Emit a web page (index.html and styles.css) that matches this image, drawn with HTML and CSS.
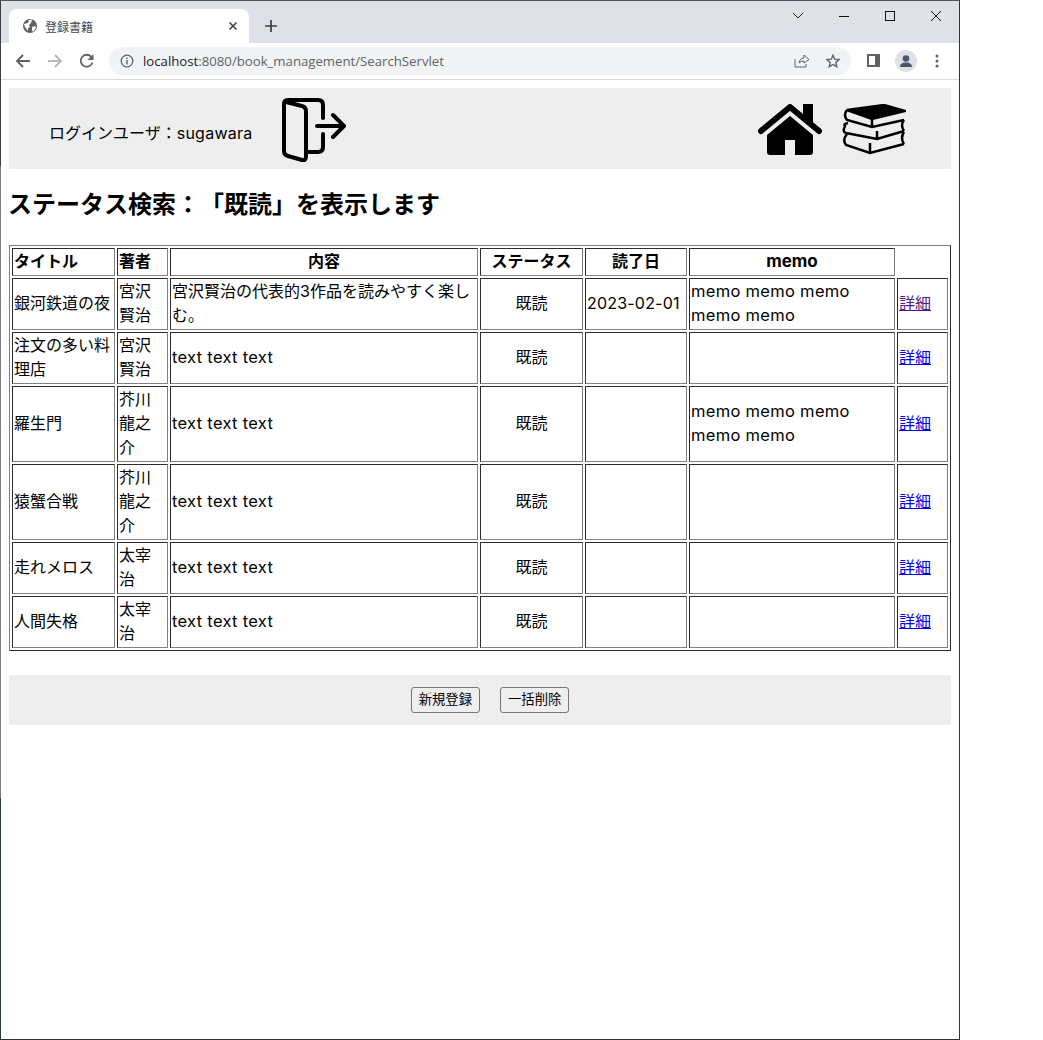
FILE: index.html
```html
<!DOCTYPE html>
<html lang="ja">

<head>
    <meta charset="UTF-8">
    <title>登録書籍</title>
    <link rel="stylesheet" href="styles.css">
</head>

<body>
    <div class="window">
        <div class="tabstrip">
            <div class="tab">
                <svg class="favicon" width="16" height="16" viewBox="0 0 16 16">
                    <circle cx="8" cy="8" r="7" fill="#5f6368"/>
                    <path d="M2 6 L6 5 L7 2 L10 1.500 L9 5 L7 7 L8 9 L6 10 L6 13 L3 9 Z M10 9 L13 8 L14 10 L11 14 L10 12 Z" fill="#fff"/>
                </svg>
                <span class="tab-title">登録書籍</span>
                <svg class="tab-close" width="10" height="10" viewBox="0 0 10 10">
                    <path d="M1.500 1.500 L8.500 8.500 M8.500 1.500 L1.500 8.500" stroke="#3c4043" stroke-width="1.600"/>
                </svg>
            </div>
            <svg class="newtab" width="12" height="12" viewBox="0 0 12 12">
                <path d="M6 0 V12 M0 6 H12" stroke="#3c4043" stroke-width="1.700"/>
            </svg>
            <div class="winctrls">
                <svg class="winbtn" width="46" height="30" viewBox="0 0 46 30"><path d="M18 12 L23 17 L28 12" fill="none" stroke="#222" stroke-width="1"/></svg>
                <svg class="winbtn" width="46" height="30" viewBox="0 0 46 30"><path d="M18 15.500 H28" stroke="#111" stroke-width="1"/></svg>
                <svg class="winbtn" width="46" height="30" viewBox="0 0 46 30"><rect x="18.500" y="10.500" width="9" height="9" fill="none" stroke="#111" stroke-width="1"/></svg>
                <svg class="winbtn" width="46" height="30" viewBox="0 0 46 30"><path d="M18 10 L28 20 M28 10 L18 20" stroke="#111" stroke-width="1"/></svg>
            </div>
        </div>

        <div class="toolbar">
            <svg width="16" height="14" viewBox="0 0 16 14"><path d="M15 7 H2 M8 1 L2 7 L8 13" fill="none" stroke="#5f6368" stroke-width="1.800"/></svg>
            <svg width="16" height="14" viewBox="0 0 16 14"><path d="M1 7 H14 M8 1 L14 7 L8 13" fill="none" stroke="#b4b7bb" stroke-width="1.800"/></svg>
            <svg width="16" height="16" viewBox="0 0 16 16"><path d="M13.500 9.500 A6 6 0 1 1 12.300 3.800" fill="none" stroke="#5f6368" stroke-width="1.800"/><path d="M14.500 1 V7 H8.500 Z" fill="#5f6368"/></svg>
            <div class="omnibox">
                <svg width="14" height="14" viewBox="0 0 14 14"><circle cx="7" cy="7" r="5.800" fill="none" stroke="#5f6368" stroke-width="1.300"/><path d="M7 6 V10.500 M7 3.500 V5" stroke="#5f6368" stroke-width="1.400"/></svg>
                <span class="url"><span class="url-host">localhost</span>:8080/book_management/SearchServlet</span>
                <svg class="omni-share" width="16" height="15" viewBox="0 0 16 15"><path d="M1 6 V14 H12 V11 M5 10 Q6 5 10 5 V2 L15 6.500 L10 10 V8 Q7 8 5 10 Z" fill="none" stroke="#5f6368" stroke-width="1"/></svg>
                <svg width="14" height="14" viewBox="0 0 14 14"><path d="M7 1.300 L8.700 5.200 L13 5.600 L9.800 8.500 L10.700 12.700 L7 10.500 L3.300 12.700 L4.200 8.500 L1 5.600 L5.300 5.200 Z" fill="none" stroke="#5f6368" stroke-width="1.400"/></svg>
            </div>
            <svg class="sidepanel" width="13" height="13" viewBox="0 0 13 13"><rect width="13" height="13" fill="#5f6368"/><rect x="2" y="2" width="6" height="9" fill="#fff"/></svg>
            <svg class="avatar" width="22" height="22" viewBox="0 0 22 22"><circle cx="11" cy="11" r="11" fill="#dee1e6"/><circle cx="11" cy="8.500" r="3.300" fill="#4a5568"/><path d="M5 17 Q5 12.500 11 12.500 Q17 12.500 17 17 Z" fill="#4a5568"/></svg>
            <svg class="dots" width="4" height="14" viewBox="0 0 4 14"><circle cx="2" cy="2" r="1.500" fill="#5f6368"/><circle cx="2" cy="7" r="1.500" fill="#5f6368"/><circle cx="2" cy="12" r="1.500" fill="#5f6368"/></svg>
        </div>

        <div class="page">
            <header class="head">
                <div class="head-left">
                    <span class="login">ログインユーザ：<span class="login-name">sugawara</span></span>
                    <svg width="64" height="64" viewBox="0 0 64 64" fill="none" stroke="#000" stroke-width="4" stroke-linecap="round" stroke-linejoin="round">
                        <path d="M4 4 L20 8 Q24 9 24 13 V58 Q24 63 20 62 L6 58 Q2 57 2 53 V6 Q2 2 6 2 H36 Q41 2 41 7 V20"/>
                        <path d="M41 36 V49 Q41 54 36 54 H25"/>
                        <path d="M35 28 H62 M51 17 L62 28 L51 39"/>
                    </svg>
                </div>
                <div class="head-right">
                    <svg width="64" height="52" viewBox="0 0 64 52">
                        <path d="M3 27 L32 3 L61 27" fill="none" stroke="#000" stroke-width="6" stroke-linecap="round" stroke-linejoin="round"/>
                        <rect x="45" y="0" width="10" height="18"/>
                        <path d="M32 12 L9 31 V48 Q9 51 12 51 H27 V36 H37 V51 H52 Q55 51 55 48 V31 Z"/>
                    </svg>
                    <svg width="64" height="52" viewBox="0 0 64 52" fill="none" stroke="#000" stroke-width="2.500">
                        <path d="M5 6 L42 1 L63 7 L30 15 Z" fill="#000"/>
                        <path d="M5 6 Q1 11 5 16 L30 23 L62 16 M30 15 V23"/>
                        <path d="M6 19 Q1 20 3 22 L3 22 Q0 28 4 29 L35 35 L62 27 M35 27 V35 M62 16 Q58 21 62 27"/>
                        <path d="M5 30 Q0 36 4 41 L28 49 L62 40 M28 39 V49 M62 28 Q58 34 62 40"/>
                    </svg>
                </div>
            </header>

            <h2 class="title">ステータス検索：「既読」を表示します</h2>

            <table class="books">
                <colgroup>
                    <col class="c-title">
                    <col class="c-author">
                    <col class="c-body">
                    <col class="c-status">
                    <col class="c-date">
                    <col class="c-memo">
                    <col class="c-link">
                </colgroup>
                <thead>
                    <tr>
                        <th class="left">タイトル</th>
                        <th class="left">著者</th>
                        <th>内容</th>
                        <th>ステータス</th>
                        <th>読了日</th>
                        <th class="memo-head">memo</th>
                    </tr>
                </thead>
                <tbody>
                    <tr>
                        <td>銀河鉄道の夜</td>
                        <td>宮沢賢治</td>
                        <td>宮沢賢治の代表的3作品を読みやすく楽しむ。</td>
                        <td class="center">既読</td>
                        <td class="date">2023-02-01</td>
                        <td class="latin">memo memo memo memo memo</td>
                        <td><a class="visited" href="#">詳細</a></td>
                    </tr>
                    <tr>
                        <td>注文の多い料理店</td>
                        <td>宮沢賢治</td>
                        <td class="latin">text text text</td>
                        <td class="center">既読</td>
                        <td></td>
                        <td></td>
                        <td><a href="#">詳細</a></td>
                    </tr>
                    <tr>
                        <td>羅生門</td>
                        <td>芥川龍之介</td>
                        <td class="latin">text text text</td>
                        <td class="center">既読</td>
                        <td></td>
                        <td class="latin">memo memo memo memo memo</td>
                        <td><a href="#">詳細</a></td>
                    </tr>
                    <tr>
                        <td>猿蟹合戦</td>
                        <td>芥川龍之介</td>
                        <td class="latin">text text text</td>
                        <td class="center">既読</td>
                        <td></td>
                        <td></td>
                        <td><a href="#">詳細</a></td>
                    </tr>
                    <tr>
                        <td>走れメロス</td>
                        <td>太宰治</td>
                        <td class="latin">text text text</td>
                        <td class="center">既読</td>
                        <td></td>
                        <td></td>
                        <td><a href="#">詳細</a></td>
                    </tr>
                    <tr>
                        <td>人間失格</td>
                        <td>太宰治</td>
                        <td class="latin">text text text</td>
                        <td class="center">既読</td>
                        <td></td>
                        <td></td>
                        <td><a href="#">詳細</a></td>
                    </tr>
                </tbody>
            </table>

            <div class="foot">
                <button type="button">新規登録</button>
                <button type="button">一括削除</button>
            </div>
        </div>
    </div>
</body>

</html>
```

FILE: styles.css
```css
html,
body {
    margin: 0;
    padding: 0;
    background-color: #fff;
}

body {
    font-family: Inter, "Noto Sans CJK JP", sans-serif;
    font-size: 16px;
    color: #000;
    text-spacing-trim: space-all;
}

.window {
    box-sizing: border-box;
    width: 960px;
    height: 1040px;
    padding-left: 1px;
    border-top: 1px solid #50555a;
    border-right: 1px solid #333;
    border-bottom: 1px solid #333;
    background: linear-gradient(#3c4043, #3c4043) 0 0 / 1px 165px no-repeat,
        linear-gradient(#808080, #808080) 0 165px / 1px 632px no-repeat,
        linear-gradient(#2a3a40, #2a3a40) 0 797px / 1px 100% no-repeat;
    overflow: hidden;
}

/* browser chrome */
.tabstrip {
    display: flex;
    align-items: flex-start;
    height: 42px;
    background-color: #dee1e6;
}

.tab {
    display: flex;
    align-items: center;
    box-sizing: border-box;
    width: 240px;
    height: 34px;
    margin: 8px 0 0 8px;
    padding: 0 11px 0 13px;
    background-color: #fff;
    border-radius: 8px 8px 0 0;
}

.tab-title {
    flex: 1;
    margin-left: 7px;
    font-size: 12px;
    color: #45494e;
}

.newtab {
    margin: 19px 0 0 16px;
}

.winctrls {
    display: flex;
    margin-left: auto;
}

.winbtn {
    display: block;
}

.toolbar {
    display: flex;
    align-items: center;
    box-sizing: border-box;
    height: 37px;
    padding: 0 14px 1px 14px;
    gap: 16px;
    background-color: #fff;
    border-bottom: 1px solid #dadce0;
}

.omnibox {
    display: flex;
    align-items: center;
    box-sizing: border-box;
    width: 742px;
    height: 28px;
    margin-left: -2px;
    padding: 0 11px;
    background-color: #f1f3f4;
    border-radius: 14px;
}

.url {
    flex: 1;
    margin-left: 9px;
    font-family: "Open Sans", sans-serif;
    font-size: 13.2px;
    color: #5f6368;
}

.url-host {
    color: #202124;
}

.omni-share {
    margin-right: 16px;
}

.avatar {
    margin-left: -1px;
}

.dots {
    margin-left: 2px;
}

/* page */
.page {
    padding: 8px;
    background-color: #fff;
}

.head {
    display: flex;
    align-items: center;
    justify-content: space-between;
    box-sizing: border-box;
    height: 81px;
    padding: 3px 45px 0 40px;
    background-color: #eee;
}

.head-left,
.head-right {
    display: flex;
    align-items: center;
    gap: 30px;
}

.head-right {
    gap: 20px;
}

.login {
    padding-top: 3px;
}

.login-name {
    letter-spacing: 0.25px;
}

.title {
    margin: 20px 0 24px -1px;
    font-size: 24px;
    line-height: 32px;
    font-weight: bold;
}

.books {
    table-layout: fixed;
    width: 942px;
    border: 1px outset #808080;
    border-spacing: 2px;
}

.books th,
.books td {
    border: 1px inset #808080;
    padding: 0 1px 2px 1px;
    line-height: 24px;
    word-break: break-all;
}

.books th {
    text-align: center;
}

.books th.left {
    text-align: left;
}

.books td.center {
    text-align: center;
}

.books td.latin {
    font-size: 16.5px;
    letter-spacing: 0.3px;
    word-break: normal;
}

.books td.date {
    letter-spacing: 0.2px;
}

.books th.memo-head {
    font-size: 17px;
}

.c-title { width: 103px; }
.c-author { width: 51px; }
.c-body { width: 308px; }
.c-status { width: 103px; }
.c-date { width: 102px; }
.c-memo { width: 206px; }
.c-link { width: 51px; }

.books a {
    color: #00e;
}

.books a.visited {
    color: #551a8b;
}

.foot {
    display: flex;
    justify-content: center;
    align-items: center;
    gap: 20px;
    box-sizing: border-box;
    height: 50px;
    margin-top: 24px;
    padding-left: 20px;
    background-color: #eee;
}

.foot button {
    box-sizing: border-box;
    height: 26px;
    padding: 0 7px 3px 7px;
    font-family: "Noto Sans CJK JP", sans-serif;
    font-size: 13.333px;
    color: #000;
    background-color: #efefef;
    border: 1px solid #767676;
    border-radius: 3px;
}
```
